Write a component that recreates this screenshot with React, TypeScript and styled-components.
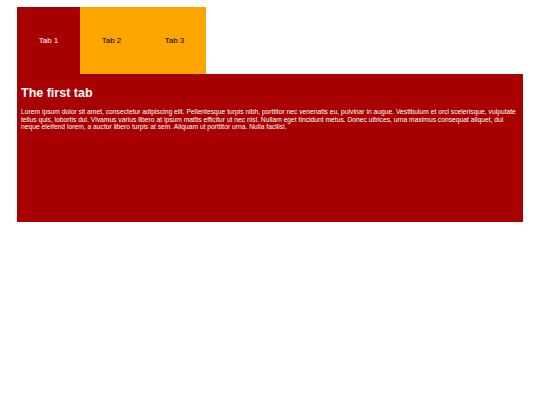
import React, { useState } from 'react';
import styled, { createGlobalStyle } from 'styled-components';

const GlobalStyle = createGlobalStyle`
  html, body {
    margin: 0;
    padding: 0;
    background: #fff;
  }
  body {
    font-family: "Liberation Sans", Arial, sans-serif;
  }
`;

const Page = styled.div`
  padding: 7px 17px 0 17px;
`;

const TabBar = styled.div`
  display: flex;
`;

const TabButton = styled.button<{ $active: boolean }>`
  width: 63px;
  height: 67px;
  border: none;
  margin: 0;
  padding: 0;
  font-family: "Liberation Sans", Arial, sans-serif;
  font-size: 8px;
  cursor: pointer;
  background: ${({ $active }) => ($active ? '#a80000' : '#ffa500')};
  color: ${({ $active }) => ($active ? '#fff' : '#000')};
`;

const Panel = styled.div`
  width: 506px;
  height: 148px;
  box-sizing: border-box;
  padding: 8px 2px 8px 4px;
  background: #a80000;
  color: #fff;
`;

const Title = styled.h3`
  margin: 4px 0 8px 0;
  font-size: 12.5px;
  font-weight: bold;
`;

const Body = styled.p`
  margin: 0;
  font-size: 6.72px;
  line-height: 7.6px;
`;

const tabs = [
  {
    label: 'Tab 1',
    title: 'The first tab',
    text: 'Lorem ipsum dolor sit amet, consectetur adipiscing elit. Pellentesque turpis nibh, porttitor nec venenatis eu, pulvinar in augue. Vestibulum et orci scelerisque, vulputate tellus quis, lobortis dui. Vivamus varius libero at ipsum mattis efficitur ut nec nisl. Nullam eget tincidunt metus. Donec ultrices, urna maximus consequat aliquet, dui neque eleifend lorem, a auctor libero turpis at sem. Aliquam ut porttitor urna. Nulla facilisi.',
  },
  { label: 'Tab 2', title: 'The second tab', text: 'Content of the second tab.' },
  { label: 'Tab 3', title: 'The third tab', text: 'Content of the third tab.' },
];

const App = () => {
  const [active, setActive] = useState(0);
  const tab = tabs[active];

  return (
    <Page>
      <GlobalStyle />
      <TabBar>
        {tabs.map((t, i) => (
          <TabButton key={t.label} $active={i === active} onClick={() => setActive(i)}>
            {t.label}
          </TabButton>
        ))}
      </TabBar>
      <Panel>
        <Title>{tab.title}</Title>
        <Body>{tab.text}</Body>
      </Panel>
    </Page>
  );
};

export default App;
